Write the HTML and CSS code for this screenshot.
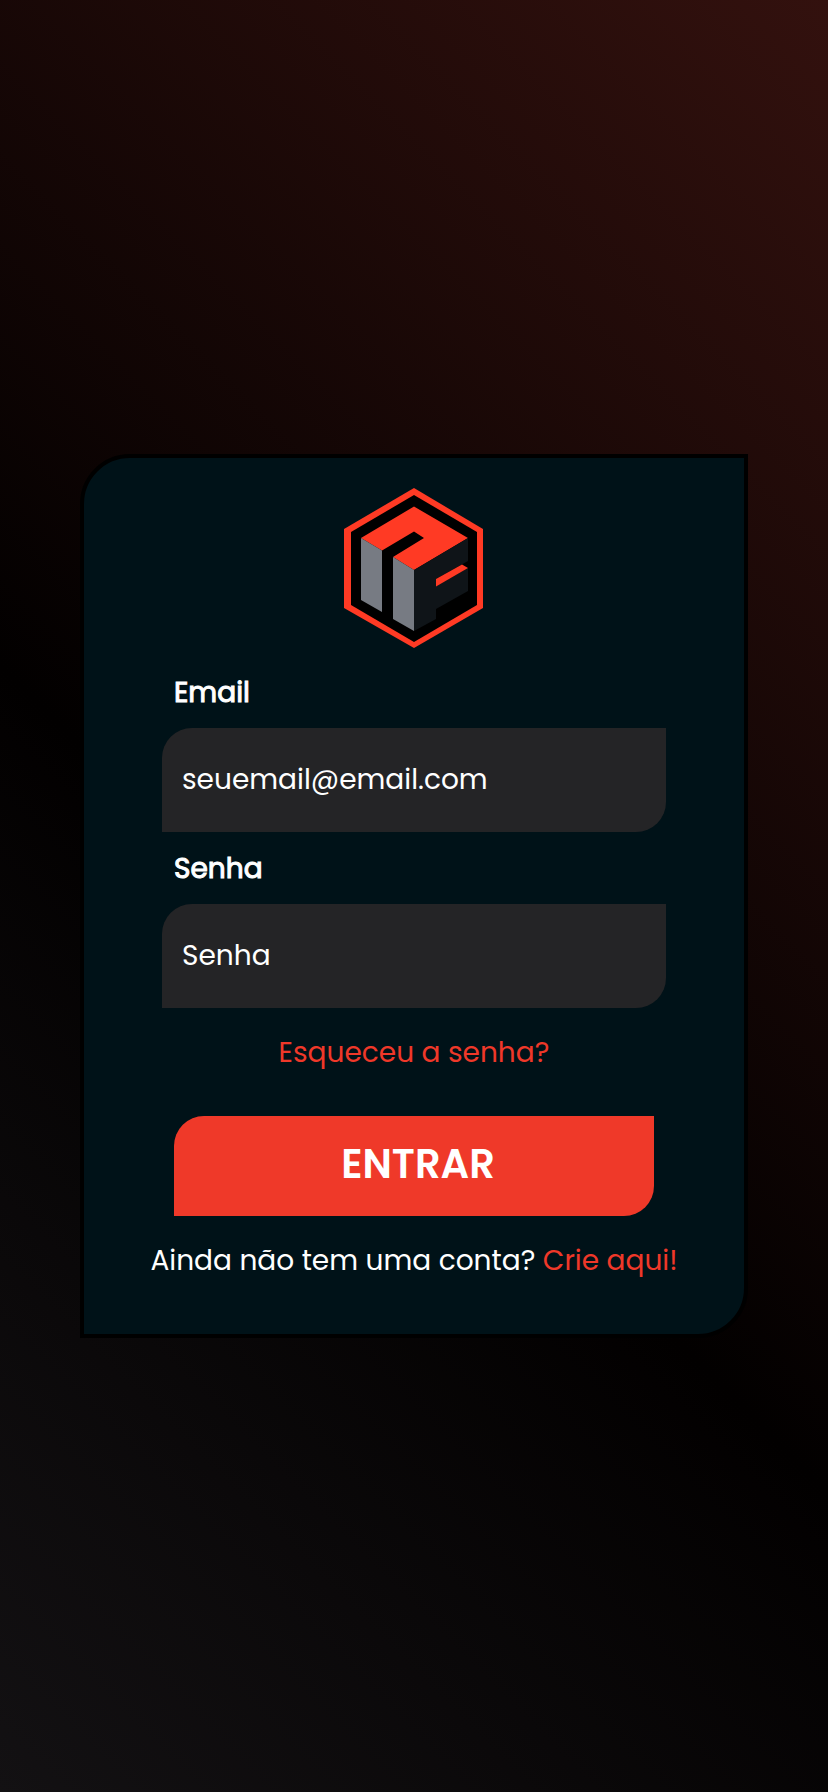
FILE: index.html
```html
<!DOCTYPE html>
<html lang="pt-BR">
<head>
<meta charset="utf-8">
<meta name="viewport" content="width=device-width, initial-scale=1">
<title>Entrar</title>
<link rel="stylesheet" href="styles.css">
</head>
<body>
<main class="card">
  <svg class="logo" viewBox="0 0 140 160" role="img" aria-label="NF">
    <path fill="#ff3a24" d="M70 0 139 41V120L70 160 0 120V41Z"/>
    <path fill="#000" d="M70 7 133 44V117L70 154 7 117V44Z"/>
    <path fill="#ff3a24" d="M70 18.500 124 50 70 82 49 69 80 50 70 43.500 38 62.500 17 50Z"/>
    <path fill="#777b83" d="M17 50 38 62.500V124L17 112ZM49 69 70 82V143L49 131Z"/>
    <path fill="#0f1418" d="M70 82 124 50V73L92 91V98L124 80V103L92 121V131L70 143Z"/>
    <path fill="#ff3a24" d="M92 91 118 76.500 124 80 92 98.500Z"/>
  </svg>
  <form class="form">
    <label class="label" for="email">Email</label>
    <input class="field" id="email" type="email" placeholder="seuemail@email.com">
    <label class="label" for="senha">Senha</label>
    <input class="field" id="senha" type="password" placeholder="Senha">
    <a class="link forgot" href="#">Esqueceu a senha?</a>
    <button class="submit" type="submit">ENTRAR</button>
  </form>
  <p class="signup">Ainda não tem uma conta? <a class="link" href="#">Crie aqui!</a></p>
</main>
</body>
</html>
```
FILE: styles.css
```css
* {
  box-sizing: border-box;
}

body {
  margin: 0;
  min-height: 100vh;
  display: flex;
  align-items: center;
  justify-content: center;
  background: linear-gradient(45deg, #131113 0%, #020000 43%, #33110e 100%);
  color: #fff;
  font-family: Poppins, Inter, sans-serif;
  font-size: 28px;
  line-height: 42px;
}

.card {
  display: flex;
  flex-direction: column;
  align-items: center;
  width: calc(100% - 160px);
  max-width: 668px;
  padding: 30px 24px 52px;
  background: #001218;
  border: 4px solid #000;
  border-radius: 50px 0;
}

.logo {
  width: 140px;
  height: 160px;
}

.form {
  display: flex;
  flex-direction: column;
  width: 100%;
  max-width: 504px;
  margin-top: 24px;
}

.label {
  margin: 0 12px 14px;
  -webkit-text-stroke: 1px #fff;
}

.field {
  width: 100%;
  height: 104px;
  margin-bottom: 16px;
  padding: 0 20px;
  border: 0;
  border-radius: 30px 0;
  background: #242426;
  color: #fff;
  font: inherit;
}

.field::placeholder {
  color: #fff;
  opacity: 1;
}

.link {
  color: #ef3829;
  text-decoration: none;
}

.forgot {
  align-self: center;
  margin: 8px 0 42px;
}

.submit {
  height: 100px;
  margin: 0 12px;
  padding: 0 0 4px 8px;
  border: 0;
  border-radius: 30px 0;
  background: #ef3929;
  color: #fff;
  font: inherit;
  font-size: 40px;
  font-weight: 600;
}

.signup {
  margin: 24px 0 0;
  text-align: center;
}
```
